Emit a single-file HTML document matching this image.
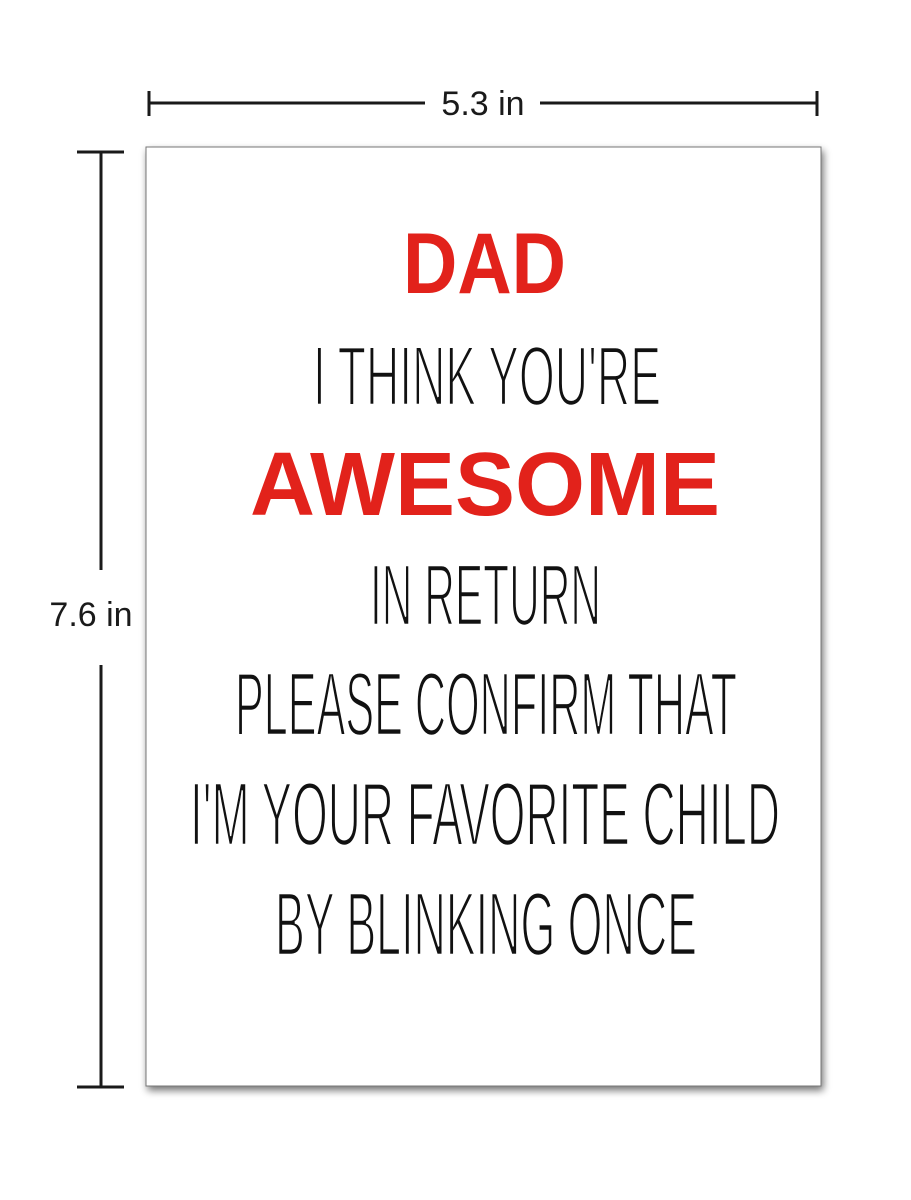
<!DOCTYPE html>
<html><head><meta charset="utf-8"><style>
html,body{margin:0;padding:0;background:#fff;}
svg{display:block}
</style></head><body>
<svg width="911" height="1200" viewBox="0 0 911 1200" xmlns="http://www.w3.org/2000/svg">
<defs>
<filter id="sh" x="-10%" y="-10%" width="120%" height="120%">
<feGaussianBlur in="SourceAlpha" stdDeviation="4"/>
<feOffset dx="2" dy="4" result="b"/>
<feComponentTransfer><feFuncA type="linear" slope="0.55"/></feComponentTransfer>
<feMerge><feMergeNode/><feMergeNode in="SourceGraphic"/></feMerge>
</filter>
</defs>
<rect width="911" height="1200" fill="#fff"/>
<g stroke="#1a1a1a" stroke-width="3" fill="none">
<line x1="148" y1="103" x2="425" y2="103"/>
<line x1="540" y1="103" x2="818" y2="103"/>
<line x1="149" y1="91" x2="149" y2="116"/>
<line x1="817" y1="91" x2="817" y2="116"/>
<line x1="101" y1="152" x2="101" y2="570"/>
<line x1="101" y1="665" x2="101" y2="1087"/>
<line x1="77" y1="152" x2="124" y2="152"/>
<line x1="77" y1="1087" x2="124" y2="1087"/>
</g>
<text x="483" y="115" font-family="Liberation Sans, sans-serif" font-size="34" fill="#1a1a1a" text-anchor="middle">5.3 in</text>
<text x="91" y="626" font-family="Liberation Sans, sans-serif" font-size="34" fill="#1a1a1a" text-anchor="middle">7.6 in</text>
<rect x="146" y="147" width="675" height="939" fill="#fff" stroke="#777" stroke-width="1" filter="url(#sh)"/>
<g font-family="Liberation Sans, sans-serif" text-anchor="start">
<text x="403" y="293" font-size="86" font-weight="bold" fill="#e2221b" textLength="163" lengthAdjust="spacingAndGlyphs">DAD</text>
<text x="250" y="515" font-size="90" font-weight="bold" fill="#e2221b" textLength="470" lengthAdjust="spacingAndGlyphs">AWESOME</text>
<g fill="#111" stroke="#fff" stroke-width="2.6">
<text x="313" y="405" font-size="84" textLength="348" lengthAdjust="spacingAndGlyphs">I THINK YOU'RE</text>
<text x="370" y="625" font-size="87" textLength="231" lengthAdjust="spacingAndGlyphs">IN RETURN</text>
<text x="235" y="735" font-size="90" textLength="502" lengthAdjust="spacingAndGlyphs">PLEASE CONFIRM THAT</text>
<text x="190" y="845" font-size="90" textLength="590" lengthAdjust="spacingAndGlyphs">I'M YOUR FAVORITE CHILD</text>
<text x="275" y="955" font-size="90" textLength="422" lengthAdjust="spacingAndGlyphs">BY BLINKING ONCE</text>
</g>
</g>
</svg>
</body></html>
